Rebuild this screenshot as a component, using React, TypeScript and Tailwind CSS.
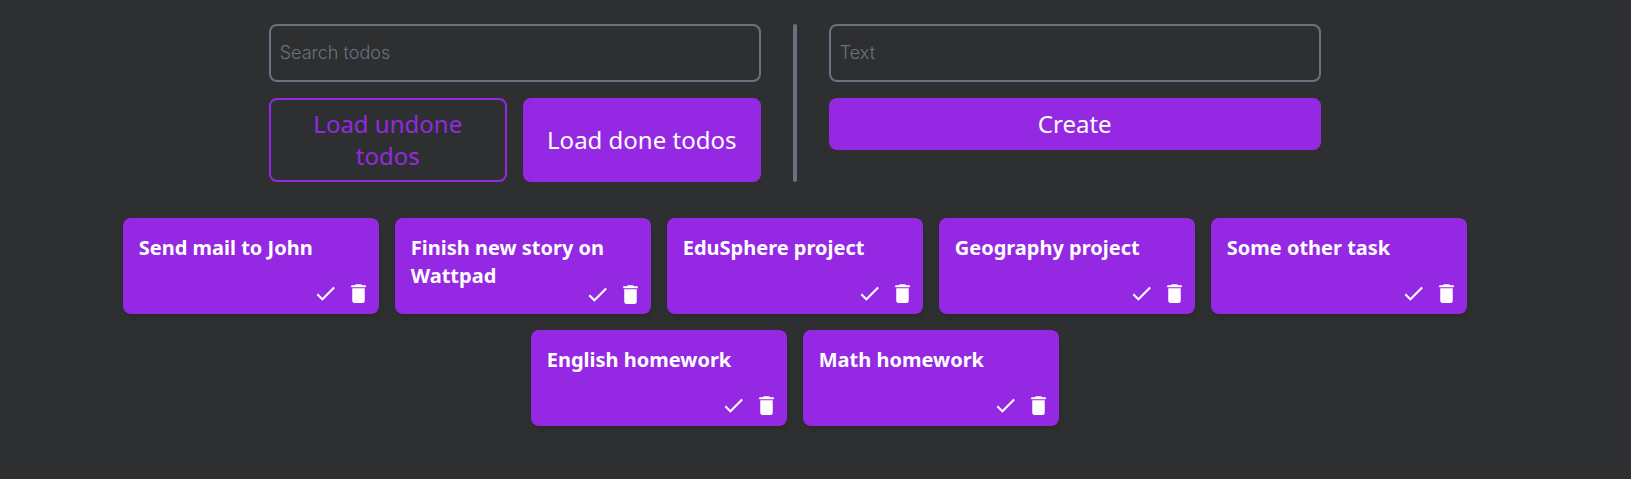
import { MdCheck, MdDelete } from "react-icons/md";

const todos = [
  "Send mail to John",
  "Finish new story on Wattpad",
  "EduSphere project",
  "Geography project",
  "Some other task",
  "English homework",
  "Math homework",
];

const inputClass =
  "h-[58px] w-full rounded-lg border-2 border-gray-500 bg-transparent px-[9px] pb-0.5 font-['Inter',sans-serif] text-lg font-light text-white outline-none placeholder:text-gray-500";

const buttonClass =
  "rounded-lg border-2 border-[#9529e3] px-4 py-2 text-2xl";

function TodoCard({ text }: { text: string }) {
  return (
    <article className="flex h-24 w-64 flex-col justify-between rounded-lg bg-[#9529e3] pt-4 pr-2 pb-2 pl-4 text-white shadow-md">
      <h2 className="h-12 text-xl leading-7 font-bold">{text}</h2>
      <div className="flex justify-end gap-2">
        <button aria-label="Mark as done">
          <MdCheck size={25} />
        </button>
        <button aria-label="Delete">
          <MdDelete size={25} />
        </button>
      </div>
    </article>
  );
}

export default function App() {
  return (
    <main className="flex min-h-screen flex-col items-center bg-[#2e2f31] pt-6 pr-[41.5px] font-['Noto_Sans',sans-serif]">
      <section className="flex gap-8">
        <div className="flex w-[492px] flex-col gap-4">
          <input className={inputClass} placeholder="Search todos" />
          <div className="grid grid-cols-2 gap-4">
            <button className={`${buttonClass} text-[#9529e3]`}>
              Load undone todos
            </button>
            <button className={`${buttonClass} bg-[#9529e3] text-white`}>
              Load done todos
            </button>
          </div>
        </div>
        <div className="w-1 rounded-sm bg-gray-500" />
        <div className="flex w-[492px] flex-col gap-4">
          <input className={inputClass} placeholder="Text" />
          <button className={`${buttonClass} bg-[#9529e3] text-white`}>
            Create
          </button>
        </div>
      </section>
      <section className="mt-9 flex w-[1344px] flex-wrap justify-center gap-4">
        {todos.map((text) => (
          <TodoCard key={text} text={text} />
        ))}
      </section>
    </main>
  );
}
